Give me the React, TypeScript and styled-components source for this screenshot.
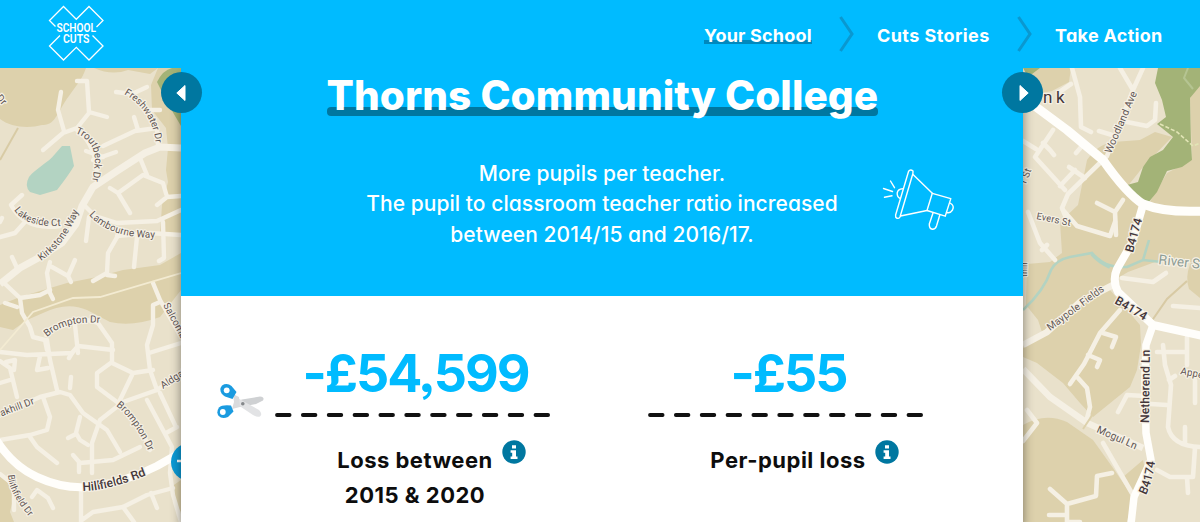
import { Fragment } from 'react';
import styled, { createGlobalStyle } from 'styled-components';

const colors = {
    sky: '#00bbff',
    teal: '#0077a0',
    chevron: '#0a98d0',
    ink: '#0d0d0d',
    land: '#e9e1cb',
    field: '#ddd1ac',
    road: '#f5f0e4',
    water: '#b3d3c2',
    wood: '#a3b377',
    label: '#5f5553',
    labelDark: '#43363a',
};

const NAV_ITEMS = [
    { label: 'Your School', width: 108, spacing: 0.2, active: true },
    { label: 'Cuts Stories', width: 113, spacing: 0.42, active: false },
    { label: 'Take Action', width: 108, spacing: 0.3, active: false },
];

const STATS = [
    { value: '-£54,599', lines: ['Loss between', '2015 & 2020'], scissors: true },
    { value: '-£55', lines: ['Per-pupil loss'], scissors: false },
];

type Label = { id: string; text: string; d: string; size?: number; weight?: number; color?: string; spacing?: number };

const LEFT_LABELS: Label[] = [
    { id: 'freshwater', text: 'Freshwater Dr', d: 'M124 94 Q149 108 155 137 L157 155', size: 9.8 },
    { id: 'troutbeck', text: 'Troutbeck Dr', d: 'M75 133 Q99 142 94 169 L91 190' },
    { id: 'lakeside', text: 'Lakeside Ct', d: 'M14 210 Q27 230 70 225' },
    { id: 'kirkstone', text: 'Kirkstone Way', d: 'M41 261 Q72 240 84 194' },
    { id: 'lambourne', text: 'Lambourne Way', d: 'M89 215 Q113 242 170 237' },
    { id: 'brompton1', text: 'Brompton Dr', d: 'M47 337 Q68 318 110 324' },
    { id: 'salcombe', text: 'Salcombe', d: 'M163 305 L188 352' },
    { id: 'oakhill', text: 'Oakhill Dr', d: 'M-5 419 L52 397' },
    { id: 'aldgate', text: 'Aldgate', d: 'M163 389 L202 364' },
    { id: 'brompton2', text: 'Brompton Dr', d: 'M116 406 Q136 420 155 466' },
    { id: 'blithfield', text: 'Blithfield Dr', d: 'M8 475 Q9 496 36 524', size: 9.3 },
    { id: 'hillfields', text: 'Hillfields Rd', d: 'M83 491 Q110 491 162 469', size: 12.2, weight: 500, color: colors.labelDark },
    { id: 'edge', text: 'Dr', d: 'M-4 98 L12 116' },
];

const RIGHT_LABELS: Label[] = [
    { id: 'bank', text: 'nk', d: 'M1043 103 L1080 103', size: 17, color: colors.labelDark, spacing: 3.5 },
    { id: 'woodland', text: 'Woodland Ave', d: 'M1111 154 L1143 80', size: 10.4 },
    { id: 'b1', text: 'B4174', d: 'M1133 253 L1147 202', size: 12, weight: 500, color: colors.labelDark },
    { id: 'evers', text: 'Evers St', d: 'M1036 219 L1085 229', size: 9.7 },
    { id: 'river', text: 'River S', d: 'M1158 264 L1220 271', size: 13.5, color: '#8d9c95' },
    { id: 'maypole', text: 'Maypole Fields', d: 'M1050 331 L1120 279', size: 10.2 },
    { id: 'b2', text: 'B4174', d: 'M1114 303 L1160 330', size: 12, weight: 500, color: colors.labelDark },
    { id: 'netherend', text: 'Netherend Ln', d: 'M1149 423 L1150 330', size: 12.2, weight: 500, color: colors.labelDark },
    { id: 'mogul', text: 'Mogul Ln', d: 'M1096 432 L1150 456', size: 10.4 },
    { id: 'b3', text: 'B4174', d: 'M1146 495 Q1154 480 1157 445', size: 12, weight: 500, color: colors.labelDark },
    { id: 'appe', text: 'Appe', d: 'M1180 374 L1220 382' },
    { id: 'st', text: 'r St', d: 'M1026 184 L1038 154' },
    { id: 'hill', text: 'thill', d: 'M1027 277 L1028 235', size: 9 },
];

function MapLabels({ labels }: { labels: Label[] }) {
    return (
        <>
            {labels.map(({ id, text, d, size = 10, weight = 400, color = colors.label, spacing = 0 }) => (
                <Fragment key={id}>
                    <path id={`street-${id}`} d={d} fill='none' />
                    <StreetName fontSize={size} fontWeight={weight} fill={color} letterSpacing={spacing}>
                        <textPath href={`#street-${id}`}>{text}</textPath>
                    </StreetName>
                </Fragment>
            ))}
        </>
    );
}

function LeftMap() {
    return (
        <MapSvg viewBox='0 68 181 454' width='181' height='454'>
            <g fill={colors.field}>
                <path d='M0 68 H86 C82 80 75 87 69 96 C58 110 56 126 42 125 C28 129 10 127 0 119 Z' />
                <path d='M94 68 Q112 76 128 70 L150 74 L158 68 Z' />
                <path d='M158 68 L151 85 L152 110 L166 128 L168 148 L166 170 L168 182 L162 205 L160 235 L181 235 V68 Z' />
                <path d='M0 305 L20 297 L67 283 L97 277 L123 270 L160 265 L181 253 V290 L160 317 Q133 327 110 322 L87 310 Q67 301 43 313 L27 320 L13 330 L0 327 Z' />
                <path d='M0 472 L10 480 L14 495 L10 512 L14 522 H0 Z' />
                <path d='M171 487 L181 480 V512 L172 500 Z' />
            </g>
            <path d='M157 82 Q163 70 172 68 H181 V126 L168 104 Z' fill={colors.wood} />
            <path d='M70 146 L62 146 L55 154 C48 163 36 168 29 177 Q24 186 30 192 L40 195 L57 190 Q68 176 74 166 Z' fill={colors.water} />
            <path d='M0 160 L18 128' fill='none' stroke='#d8cba5' strokeWidth='2' />
            <g fill='none' stroke={colors.road} strokeWidth='4.4' strokeLinecap='round' strokeLinejoin='round'>
                <path d='M77 81 L87 81 L89 112 L107 117 M61 92 L58 110 L64 131 M43 150 L63 133 L77 128 L89 113' />
                <path d='M116 92 L132 94 L147 87 M134 117 L138 130 M103 146 L135 131 L157 128 L158 146 M148 110 L160 110' />
                <path d='M77 130 Q97 145 97 178 M86 151 L103 157 M93 160 L116 152 M140 158 L147 175' />
                <path d='M110 188 L118 193 L143 175 L163 183 L167 197 L157 205 M118 193 L130 213 M167 197 L181 196' />
                <path d='M84 205 L95 216 L117 223 L157 221 L181 210 M117 236 L150 233 L181 235 M89 217 L86 241' />
                <path d='M120 232 L108 253 L107 273 L93 281 M107 275 L115 276 M137 237 L134 267 M163 222 L164 258 L159 261' />
                <path d='M22 195 L11 205 Q25 231 60 226 M0 237 L15 233 L24 223 M0 222 L2 218 M12 257 L17 268' />
                <path d='M50 262 L47 273 L50 293 L53 299 M52 267 L68 276 L75 260 M68 276 L71 282' />
                <path d='M3 282 L20 298 L40 295 L50 290 M20 298 L22 313 L30 327 L33 337 L45 340 L47 350 M5 303 L17 307' />
                <path d='M46 335 Q70 312 98 323 L112 343 L112 362 L97 373 L97 387 L117 402 L140 427 L150 450 M75 325 L78 353' />
                <path d='M153 283 L160 300 L181 337 M160 302 L153 305 L153 325 L147 345 L150 370 L157 390' />
                <path d='M0 352 L27 355 L72 353 L78 346 L113 350 M47 340 L50 360 L57 390 M6 362 L15 360 L14 370 M40 356 L37 370 L48 368' />
                <path d='M0 361 L10 368 L17 397 M0 383 L10 380 M71 377 L70 388 M72 353 L69 358' />
                <path d='M112 363 L133 373 L153 370 M133 373 L120 400 M149 353 L181 343' />
                <path d='M92 473 L92 443 L100 420 L123 402 L157 390 L181 373 M160 393 L175 425 M166 433 L177 427' />
                <path d='M0 415 L40 397 L60 392 L70 395 L83 413 L107 430 L120 452' />
                <path d='M43 397 L50 417 L47 430 L30 435 L0 440 M30 437 L37 447 L57 463' />
                <path d='M80 417 L76 433 L80 440 L88 445 M68 438 L76 434 M73 455 L80 463 L113 460 L140 447 M79 463 L79 472' />
                <path d='M147 400 L172 447 L170 473 L173 495 L181 522 M81 488 V522 M82 520 L93 512 L123 507 L134 522' />
                <path d='M123 507 L147 495 L173 488 M151 493 L157 508 M32 497 L37 490 L48 498 L53 508 M0 474 L14 485 L14 510' />
            </g>
            <path d='M0 284 L20 268 L40 257 L62 243 L76 224 L82 206 L93 187 L117 171 L145 153 L160 147 L181 148' fill='none' stroke={colors.road} strokeWidth='7' />
            <path d='M0 350 L33 312 L73 298 L100 297 L181 273' fill='none' stroke='#f3ebd2' strokeWidth='1.8' />
            <path d='M-3 441 Q13 466 37 477 Q63 489 88 487 Q124 483 157 466 L185 450' fill='none' stroke='#fffefb' strokeWidth='8' />
            <MapLabels labels={LEFT_LABELS} />
            <circle cx='190' cy='462' r='19' fill='#0c9ad5' />
            <path d='M177 461 H190' stroke='#fff' strokeWidth='2.5' />
        </MapSvg>
    );
}

function RightMap() {
    return (
        <MapSvg viewBox='1023 68 177 454' width='177' height='454'>
            <g fill={colors.field}>
                <path d='M1033 68 H1071 L1069 82 L1052 91 L1042 93 L1030 85 Z' />
                <path d='M1200 80 L1190 98 L1192 160 L1167 173 L1148 205 L1200 214 Z' />
                <path d='M1087 160 Q1098 144 1113 142 L1140 140 L1155 132 L1172 137 L1143 167 L1127 187 L1148 203 L1200 215 V262 L1155 262 L1128 272 L1118 278 L1110 290 L1140 325 L1141 345 L1137 370 L1130 387 L1093 417 L1080 403 L1063 383 L1037 363 L1023 357 V348 L1043 335 L1038 320 L1026 305 L1027 264 L1050 262 L1062 253 L1060 222 L1078 205 Z' />
                <path d='M1200 256 L1190 264 Q1185 278 1189 289 L1200 298 Z' />
                <path d='M1023 425 Q1045 412 1067 422 L1093 440 L1113 468 L1133 497 L1127 522 H1023 Z' />
                <path d='M1123 477 L1143 460 L1145 470 L1133 495 Z' />
            </g>
            <path d='M1023 68 H1040 L1028 77 Z' fill={colors.wood} />
            <path
                d='M1158 68 H1200 V86 L1190 98 L1191 143 L1192 160 L1182 167 L1167 171 L1157 192 L1148 203 L1137 197 L1127 185 L1138 182 L1143 167 L1150 157 L1163 150 L1173 137 L1157 124 L1166 117 L1162 100 L1155 83 Z'
                fill={colors.wood}
            />
            <path d='M1188 68 L1184 78 L1193 89' fill='none' stroke='#b5c492' strokeWidth='2' />
            <path d='M1160 124 L1177 132 L1193 146 L1200 143' fill='none' stroke='#e2e5b6' strokeWidth='1.6' strokeDasharray='4 2' />
            <g fill='none' stroke={colors.water} strokeWidth='2.6'>
                <path d='M1023 310 Q1044 291 1051 270 Q1056 260 1070 257 L1092 253 Q1102 268 1127 267 L1143 260 L1162 262 M1143 260 L1149 240' />
                <path d='M1092 254 Q1099 262 1110 267' strokeWidth='4' />
            </g>
            <path d='M1187 281 L1167 299 L1151 322' fill='none' stroke='#d8caa4' strokeWidth='2' />
            <g fill='none' stroke={colors.road} strokeWidth='4.6' strokeLinecap='round' strokeLinejoin='round'>
                <path d='M1120 68 L1133 90 L1143 68 M1133 90 L1107 156 L1068 194 L1062 208 L1066 218' />
                <path d='M1072 68 L1080 97 L1081 127 L1091 132 M1071 84 L1058 93 M1127 122 L1147 126 L1155 120 L1156 103 M1099 131 L1112 135' />
                <path d='M1053 130 L1035 157 L1065 190 M1043 143 L1050 150 L1054 155 M1023 141 L1036 149 M1082 146 L1076 153' />
                <path d='M1069 167 L1085 178 M1060 186 L1075 170 M1097 203 L1115 212 L1123 200 M1115 212 L1116 235' />
                <path d='M1063 210 L1077 226 L1110 236 L1115 222 M1028 212 L1040 243 L1055 260 M1047 245 L1042 250' />
                <path d='M1122 278 L1153 282 L1166 273 M1120 310 L1100 333 L1084 364 L1070 384 M1103 333 L1116 337 L1112 347 M1088 355 L1100 360 L1097 367' />
                <path d='M1078 378 L1087 388 L1090 407 L1086 422 M1103 443 L1133 495' />
                <path d='M1112 473 L1097 476 L1096 496 L1067 504 L1050 489 M1067 504 V522 H1080 M1049 515 H1066' />
                <path d='M1023 441 L1037 423 L1027 410 M1118 412 L1127 395 L1145 396 M1151 404 L1167 405' />
                <path d='M1163 345 L1165 365 L1171 385 L1168 427 Q1172 446 1200 447 M1175 376 L1169 380 M1195 380 V403 M1185 427 V443' />
                <path d='M1157 470 L1170 477 L1193 477 L1195 448 M1187 477 L1188 493 M1157 352 H1187 M1187 337 V365 M1173 306 L1200 308' />
            </g>
            <g fill='none' stroke={colors.road} strokeWidth='6.5'>
                <path d='M1023 345 L1047 332 L1080 302 L1113 285' />
                <path d='M1023 369 L1050 397 L1087 423 L1143 448' />
            </g>
            <path d='M1083 429 L1093 414' stroke={colors.field} strokeWidth='2' />
            <g fill='none' stroke='#fffefb' strokeLinejoin='round'>
                <path d='M1028 101 L1067 130 L1103 160 Q1127 194 1143 204 Q1165 213 1203 211' strokeWidth='9' />
                <path d='M1143 205 L1132 243 L1117 269 Q1112 280 1118 292 L1153 325 L1203 336' strokeWidth='8' />
                <path d='M1153 325 L1146 345 L1145 380 L1146 433 L1151 460 L1134 497 L1131 524' strokeWidth='7.5' />
            </g>
            <MapLabels labels={RIGHT_LABELS} />
        </MapSvg>
    );
}

function Logo() {
    return (
        <LogoSvg width='56' height='56' viewBox='48 5 56 56' fill='none' stroke='#fff' strokeWidth='1.3'>
            <path d='M55.5 26.5 L49.5 20.5 L63.5 6.5 L76.3 19.3 L89 6.5 L103 20.5 L96.5 27' />
            <path d='M60 35.5 L49.5 46 L63.5 60 L76.3 47.3 L89 60 L103 46 L92.5 35.5' />
            <g fill='#fff' stroke='none' fontSize='12.3' fontWeight='600'>
                <text x='56.5' y='32.4' textLength='39.5' lengthAdjust='spacingAndGlyphs'>SCHOOL</text>
                <text x='63' y='43.4' textLength='26.5' lengthAdjust='spacingAndGlyphs'>CUTS</text>
            </g>
        </LogoSvg>
    );
}

function Megaphone() {
    return (
        <MegaphoneSvg width='76' height='66' viewBox='880 166 76 66' fill='none' stroke='#fff' strokeWidth='1.4' strokeLinecap='round' strokeLinejoin='round'>
            <path d='M908.6 171.2 Q910.5 168.8 913 171 L912.9 173.5 L900 217 Q898.4 219.6 895.8 217.4 L895.6 215 Z' />
            <path d='M913 174.5 L932.3 193.3 L927 210.5 L900.5 216' />
            <path d='M932.3 193.3 L950.8 198.6 L945.2 216.2 L927 210.5' />
            <path d='M950 203 Q954.8 205.5 952.5 210 Q950 213.8 946.6 212.5' />
            <path d='M933 213 L929.3 224 Q929 228.7 932.5 229.3 Q935.4 229.3 936.5 226 L939.8 215' />
            <path d='M902.5 188.8 Q898 189 897.2 193 Q897 197 900 198.4' />
            <path d='M890.5 181 L894.5 187.7 M883.5 188.5 L892.5 191.5 M884.5 197.3 L892 195.8' />
        </MegaphoneSvg>
    );
}

function Scissors() {
    return (
        <svg width='48' height='36' viewBox='216 383 48 36'>
            <path d='M235 402 L242 399.5 L260 396.5 Q265 397 263 400.5 L256 404 L240 407 Z' fill='#cfd1d3' />
            <path d='M234 396 L243 401 L259 410 Q263 414 260 416.5 Q257 417.5 253 415 L238 405 Z' fill='#e2e3e5' />
            <path d='M233 394 L239 397 L240 407 L232 409 L234 402 Z' fill='#d9dbdd' />
            <path d='M222 385.5 Q227 382.5 231.5 386 L236.5 392 L232.5 399 L225 396.5 Q219.5 393 220.5 388 Z' fill='#1a9be0' />
            <path d='M219 407.5 Q222 404.5 231 405.5 L233.5 411.5 L228 417 Q222 419.5 218.5 415.8 Q216 412 219 407.5 Z' fill='#1a9be0' />
            <circle cx='226.7' cy='390.3' r='2.9' fill='#fff' />
            <circle cx='222.8' cy='412' r='2.9' fill='#fff' />
            <circle cx='242.8' cy='403.8' r='1.8' fill='#85888b' />
        </svg>
    );
}

function InfoIcon() {
    return (
        <InfoBadge>
            <svg width='24' height='24' viewBox='0 0 24 24'>
                <circle cx='12' cy='12' r='11.7' fill={colors.teal} />
                <path d='M10 5.2 H14 V8.6 H10 Z M8.6 10.2 H14 V16.4 H15.5 V19 H8.6 V16.4 H10.2 V12.7 H8.6 Z' fill='#fff' />
            </svg>
        </InfoBadge>
    );
}

export default function App() {
    return (
        <Page>
            <GlobalStyle />
            <Header>
                <Logo />
                <Nav>
                    {NAV_ITEMS.map(({ label, width, spacing, active }, index) => (
                        <Fragment key={label}>
                            {index > 0 && (
                                <Chevron width='16' height='38' viewBox='0 0 16 38'>
                                    <path d='M1.5 2 L13 19 L1.5 36' />
                                </Chevron>
                            )}
                            <NavLink $width={width} $spacing={spacing} $active={active}>
                                {label}
                            </NavLink>
                        </Fragment>
                    ))}
                </Nav>
            </Header>
            <Main>
                <MapPane>
                    <LeftMap />
                </MapPane>
                <Card>
                    <ArrowButton $side='left' aria-label='Previous'>
                        <svg width='12' height='18' viewBox='0 0 12 18'>
                            <path d='M9 1.5 V16.5 L0.8 9 Z' fill='#fff' stroke='#fff' strokeLinejoin='round' />
                        </svg>
                    </ArrowButton>
                    <ArrowButton $side='right' aria-label='Next'>
                        <svg width='12' height='18' viewBox='0 0 12 18'>
                            <path d='M3 1.5 V16.5 L11.2 9 Z' fill='#fff' stroke='#fff' strokeLinejoin='round' />
                        </svg>
                    </ArrowButton>
                    <Hero>
                        <Title>Thorns Community College</Title>
                        <Summary>
                            More pupils per teacher.
                            <br />
                            The pupil to classroom teacher ratio increased
                            <br />
                            between 2014/15 and 2016/17.
                        </Summary>
                        <Megaphone />
                    </Hero>
                    <Stats>
                        {STATS.map(({ value, lines, scissors }) => (
                            <Stat key={value}>
                                <Amount>{value}</Amount>
                                <CutLine>
                                    {scissors && (
                                        <ScissorsSlot>
                                            <Scissors />
                                        </ScissorsSlot>
                                    )}
                                    <svg width='276' height='4' viewBox='0 0 276 4'>
                                        <path d='M2 2 H274' stroke='#111' strokeWidth='3.8' strokeLinecap='round' strokeDasharray='12.6 13.25' />
                                    </svg>
                                </CutLine>
                                <Caption>
                                    <CaptionLine>
                                        {lines[0]}
                                        <InfoIcon />
                                    </CaptionLine>
                                    {lines[1] && <CaptionLine>{lines[1]}</CaptionLine>}
                                </Caption>
                            </Stat>
                        ))}
                    </Stats>
                </Card>
                <MapPane>
                    <RightMap />
                </MapPane>
            </Main>
        </Page>
    );
}

const GlobalStyle = createGlobalStyle`
    * {
        box-sizing: border-box;
    }
    body {
        margin: 0;
        font-family: Inter, 'Open Sans', sans-serif;
        font-feature-settings: 'cv11', 'ss03';
    }
`;

const Page = styled.div`
    width: 1200px;
    height: 522px;
    display: flex;
    flex-direction: column;
    overflow: hidden;
`;

const Header = styled.header`
    height: 68px;
    flex: none;
    padding: 0 37px 0 48px;
    display: flex;
    align-items: center;
    justify-content: space-between;
    background-color: ${colors.sky};
`;

const LogoSvg = styled.svg`
    font-family: Roboto, sans-serif;
    margin-bottom: 2px;
`;

const Nav = styled.nav`
    display: flex;
    align-items: center;
`;

const Chevron = styled.svg`
    margin: 0 22px 0 27px;
    fill: none;
    stroke: ${colors.chevron};
    stroke-width: 3px;
`;

const NavLink = styled.a<{ $width: number; $spacing: number; $active: boolean }>`
    width: ${({ $width }) => $width}px;
    font-size: 18px;
    font-weight: 700;
    line-height: 24px;
    letter-spacing: ${({ $spacing }) => $spacing}px;
    white-space: nowrap;
    color: white;
    margin-top: 3px;
    background: ${({ $active }) => ($active ? `linear-gradient(#0088bd, #0088bd) 0 16px / 100% 4px no-repeat` : 'none')};
`;

const Main = styled.main`
    height: 454px;
    display: grid;
    grid-template-columns: 181px 842px 177px;
`;

const MapPane = styled.aside`
    height: 454px;
    overflow: hidden;
    background-color: ${colors.land};
`;

const MapSvg = styled.svg`
    display: block;
    font-family: Roboto, sans-serif;
`;

const StreetName = styled.text`
    paint-order: stroke;
    stroke: ${colors.road};
    stroke-width: 2.5px;
    stroke-linejoin: round;
`;

const Card = styled.section`
    position: relative;
    background-color: white;
    box-shadow: 0 6px 10px rgba(0, 0, 0, 0.45);
    clip-path: inset(0 -20px);
`;

const ArrowButton = styled.button<{ $side: 'left' | 'right' }>`
    position: absolute;
    top: 4px;
    ${({ $side }) => $side}: -20px;
    z-index: 2;
    width: 41px;
    height: 41px;
    padding: 0;
    display: grid;
    place-items: center;
    border: 0;
    border-radius: 50%;
    background-color: ${colors.teal};
`;

const Hero = styled.div`
    position: relative;
    height: 228px;
    display: flex;
    flex-direction: column;
    align-items: center;
    background-color: ${colors.sky};
    color: white;
`;

const Title = styled.h1`
    position: relative;
    z-index: 0;
    width: 551px;
    margin: 1px 0 0;
    font-size: 40.5px;
    font-weight: 800;
    line-height: 54px;
    letter-spacing: 0.1px;
    text-align: center;
    white-space: nowrap;

    &::after {
        content: '';
        position: absolute;
        z-index: -1;
        left: 0;
        right: 0;
        top: 38px;
        height: 9px;
        border-radius: 4px;
        background-color: ${colors.teal};
    }
`;

const Summary = styled.p`
    margin: 36px 0 0;
    font-size: 21px;
    font-weight: 500;
    line-height: 30.3px;
    letter-spacing: 0.06px;
    text-align: center;
    white-space: nowrap;
`;

const MegaphoneSvg = styled.svg`
    position: absolute;
    left: 699px;
    top: 98px;
`;

const Stats = styled.div`
    padding: 48px 99px 0 94px;
    display: flex;
    justify-content: space-between;
`;

const Stat = styled.div`
    width: 276px;
    display: flex;
    flex-direction: column;
    align-items: center;
`;

const Amount = styled.div`
    padding-left: 5px;
    font-size: 52px;
    font-weight: 700;
    line-height: 60px;
    letter-spacing: -2px;
    white-space: nowrap;
    color: ${colors.sky};
`;

const CutLine = styled.div`
    position: relative;
    height: 4px;
    margin-top: 9px;
    display: flex;
`;

const ScissorsSlot = styled.div`
    position: absolute;
    left: -59px;
    top: -30px;
`;

const Caption = styled.div`
    margin-top: 26px;
    padding-left: 4px;
    display: flex;
    flex-direction: column;
    align-items: center;
    gap: 1px;
    color: ${colors.ink};
`;

const CaptionLine = styled.div`
    position: relative;
    font-size: 22px;
    font-weight: 700;
    line-height: 34px;
    letter-spacing: 0.5px;
    white-space: nowrap;
`;

const InfoBadge = styled.span`
    position: absolute;
    left: calc(100% + 9px);
    top: -3px;
    display: flex;
`;
